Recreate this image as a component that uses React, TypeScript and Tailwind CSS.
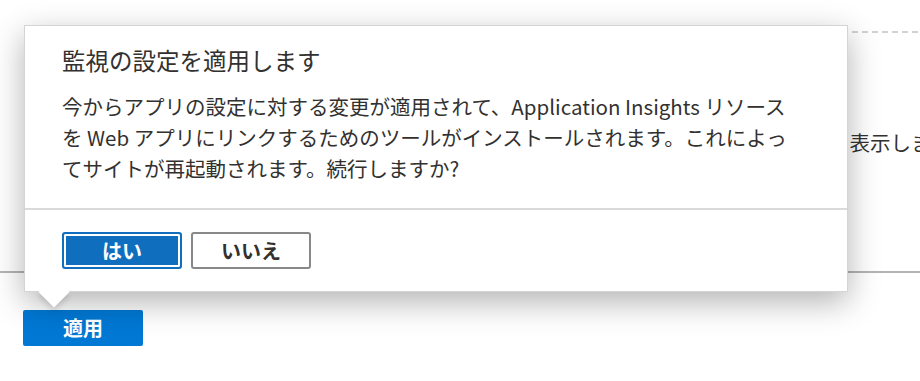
import React from "react";

const font = "font-['Segoe_UI','Noto_Sans_CJK_JP',sans-serif]";

function ConfirmCallout() {
  return (
    <div className="absolute left-[24px] top-[25px] w-[824px] border border-[#d4d4d4] bg-white text-[#323130] shadow-[0_10px_30px_rgba(0,0,0,0.3)]">
      <div className="px-[37px] pb-[24px] pt-[19px]">
        <h2 className="text-[23.5px] leading-[30px] font-normal">監視の設定を適用します</h2>
        <p className="mt-[16px] text-[20.5px] leading-[31px] whitespace-nowrap">
          <span className="block">今からアプリの設定に対する変更が適用されて、Application Insights リソース</span>
          <span className="block">を Web アプリにリンクするためのツールがインストールされます。これによっ</span>
          <span className="block">てサイトが再起動されます。続行しますか?</span>
        </p>
      </div>
      <div className="h-[2px] bg-[#dadada]" />
      <div className="flex gap-[9px] px-[37px] py-[22px]">
        <button
          type="button"
          className="h-[37px] w-[120px] rounded-[3px] border-2 border-[#106ebe] bg-[#106ebe] text-[20px] font-bold text-white shadow-[inset_0_0_0_2px_#ffffff]"
        >
          はい
        </button>
        <button
          type="button"
          className="h-[37px] w-[120px] rounded-[3px] border-2 border-[#8a8886] bg-white text-[20px] font-bold text-[#323130]"
        >
          いいえ
        </button>
      </div>
      <div className="absolute -bottom-[12px] left-[18px] h-[22px] w-[22px] rotate-45 bg-white shadow-[3px_3px_5px_rgba(0,0,0,0.12)]" />
    </div>
  );
}

export default function App() {
  return (
    <div className={`relative h-[381px] w-[920px] overflow-hidden bg-white ${font}`}>
      <div className="pt-[31px]">
        <div className="ml-[852px] h-[2px] bg-[repeating-linear-gradient(90deg,#d2d2d2_0_6px,transparent_6px_10px)]" />
      </div>
      <div className="mt-[94px] whitespace-nowrap pl-[829px] text-[20.5px] leading-[30px] text-[#323130]">
        を表示します
      </div>
      <div className="mt-[114px] h-[2px] bg-[#b4b4b4]" />
      <button
        type="button"
        className="ml-[23px] mt-[37px] h-[36px] w-[120px] rounded-[2px] bg-[#0078d4] text-[20px] font-bold text-white"
      >
        適用
      </button>
      <ConfirmCallout />
    </div>
  );
}
